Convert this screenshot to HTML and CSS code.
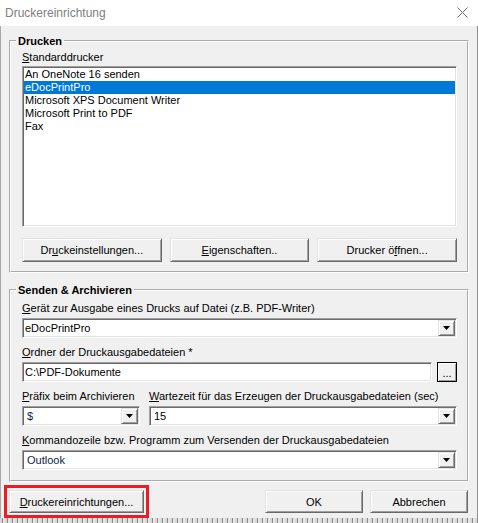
FILE: index.html
```html
<!DOCTYPE html>
<html>
<head>
  <meta charset="UTF-8">
  <title>Druckereinrichtung</title>
  <link rel="stylesheet" href="styles.css">
</head>
<body>
  <div class="window">
    <div class="titlebar">
      <span class="title">Druckereinrichtung</span>
      <svg class="close" width="11" height="11" viewBox="0 0 11 11">
        <path d="M0.5 0.5 L10.5 10.5 M10.5 0.5 L0.5 10.5" stroke="#6b6b6b" stroke-width="1" fill="none"/>
      </svg>
    </div>

    <div class="client">
      <fieldset class="group group-print">
        <legend>Drucken</legend>
        <div class="label"><u>S</u>tandarddrucker</div>
        <div class="listbox">
          <div class="item">An OneNote 16 senden</div>
          <div class="item selected">eDocPrintPro</div>
          <div class="item">Microsoft XPS Document Writer</div>
          <div class="item">Microsoft Print to PDF</div>
          <div class="item">Fax</div>
        </div>
        <div class="button-row">
          <button class="btn">Dr<u>u</u>ckeinstellungen...</button>
          <button class="btn"><u>E</u>igenschaften..</button>
          <button class="btn">Drucker ö<u>f</u>fnen...</button>
        </div>
      </fieldset>

      <fieldset class="group group-send">
        <legend>Senden &amp; Archivieren</legend>
        <div class="field">
          <div class="label"><u>G</u>erät zur Ausgabe eines Drucks auf Datei (z.B. PDF-Writer)</div>
          <div class="combo">
            <span class="value">eDocPrintPro</span>
            <span class="drop"><svg width="7" height="4"><polygon points="0,0 7,0 3.5,4" fill="#000"/></svg></span>
          </div>
        </div>
        <div class="field">
          <div class="label"><u>O</u>rdner der Druckausgabedateien *</div>
          <div class="input-row">
            <div class="textbox">C:\PDF-Dokumente</div>
            <button class="btn btn-browse">...</button>
          </div>
        </div>
        <div class="field-row">
          <div class="field">
            <div class="label"><u>P</u>räfix beim Archivieren</div>
            <div class="combo">
              <span class="value value-blue">$</span>
              <span class="drop"><svg width="7" height="4"><polygon points="0,0 7,0 3.5,4" fill="#000"/></svg></span>
            </div>
          </div>
          <div class="field">
            <div class="label"><u>W</u>artezeit für das Erzeugen der Druckausgabedateien (sec)</div>
            <div class="combo">
              <span class="value value-wide">15</span>
              <span class="drop"><svg width="7" height="4"><polygon points="0,0 7,0 3.5,4" fill="#000"/></svg></span>
            </div>
          </div>
        </div>
        <div class="field">
          <div class="label"><u>K</u>ommandozeile bzw. Programm zum Versenden der Druckausgabedateien</div>
          <div class="combo">
            <span class="value value-blue">Outlook</span>
            <span class="drop"><svg width="7" height="4"><polygon points="0,0 7,0 3.5,4" fill="#000"/></svg></span>
          </div>
        </div>
      </fieldset>

      <div class="footer">
        <button class="btn btn-setup"><u>D</u>ruckereinrichtungen...</button>
        <button class="btn btn-dialog">OK</button>
        <button class="btn btn-dialog">Abbrechen</button>
      </div>
    </div>
    <div class="desktop"></div>
  </div>
</body>
</html>
```

FILE: styles.css
```css
/* Dialog Druckereinrichtung */
body {
  margin: 0;
  padding: 0;
  font-family: "Liberation Sans", Arial, sans-serif;
  font-size: 11px;
  color: #000;
  background-color: #f0f0f0;
}

.window {
  width: 478px;
  height: 523px;
  display: flex;
  flex-direction: column;
  overflow: hidden;
}

.titlebar {
  height: 26px;
  background-color: #fff;
  display: flex;
  align-items: center;
  justify-content: space-between;
  padding: 0 10px 0 5px;
  flex-shrink: 0;
}

.title {
  font-size: 12px;
  color: #808080;
}

.close {
  margin-top: -1px;
}

.client {
  flex: 1;
  padding: 8px 8px 0 8px;
  border-left: 1px solid #a9a9a9;
  border-right: 1px solid #8c8c8c;
}

.group {
  margin: 0;
  padding: 3px 10px 9px 11px;
  border: 2px groove #fff;
  min-width: 0;
}

.group legend {
  padding: 0 2px;
  margin-left: -6px;
  font-weight: bold;
  line-height: 14px;
}

.group-send {
  margin-top: 10px;
  padding-top: 5px;
  padding-bottom: 10px;
}

.label {
  line-height: 13px;
  height: 13px;
  white-space: nowrap;
}

/* versenkte Felder */
.listbox,
.combo,
.textbox {
  box-sizing: border-box;
  background-color: #fff;
  border: 1px solid;
  border-color: #a0a0a0 #fff #fff #a0a0a0;
  box-shadow: inset 1px 1px 0 #696969, inset -1px -1px 0 #e3e3e3;
  padding: 1px;
}

.listbox {
  margin-top: 2px;
  height: 161px;
}

.item {
  line-height: 13px;
  padding-left: 1px;
}

.item.selected {
  background-color: #0078d7;
  color: #fff;
}

.button-row {
  display: grid;
  grid-template-columns: 1fr 1fr 1fr;
  gap: 8px;
  margin-top: 11px;
}

.btn {
  font-family: inherit;
  font-size: 11px;
  color: #000;
  background-color: #f0f0f0;
  border: 1px solid;
  border-color: #e3e3e3 #696969 #696969 #e3e3e3;
  box-shadow: inset 1px 1px 0 #fff, inset -1px -1px 0 #a0a0a0;
  height: 24px;
  padding: 0;
  margin: 0;
}

.field {
  display: flex;
  flex-direction: column;
  gap: 3px;
}

.field + .field,
.field + .field-row,
.field-row + .field {
  margin-top: 8px;
}

.field-row .field {
  margin-top: 0;
}

.combo {
  height: 20px;
  display: flex;
  align-items: center;
  justify-content: space-between;
}

.value {
  padding-left: 1px;
  line-height: 16px;
}

.value-blue {
  padding-left: 3px;
  color: #0c1e4a;
}

.value-wide {
  padding-left: 3px;
}

.drop {
  width: 17px;
  height: 16px;
  display: flex;
  align-items: center;
  justify-content: center;
  box-sizing: border-box;
  background-color: #f0f0f0;
  border: 1px solid;
  border-color: #e3e3e3 #696969 #696969 #e3e3e3;
  box-shadow: inset 1px 1px 0 #fff, inset -1px -1px 0 #a0a0a0;
}

.input-row {
  display: flex;
  gap: 5px;
}

.textbox {
  flex: 1;
  height: 20px;
  line-height: 16px;
  padding-left: 2px;
}

.btn-browse {
  width: 20px;
  height: 20px;
  border-color: #000;
  line-height: 14px;
  padding-top: 2px;
}

.field-row {
  display: grid;
  grid-template-columns: 118px 1fr;
  gap: 9px;
}

.footer {
  display: flex;
  gap: 7px;
  margin-top: 8px;
  padding-right: 1px;
}

.btn-setup {
  width: 135px;
  height: 23px;
  margin-right: auto;
  outline: 3px solid #e81d25;
  outline-offset: 2px;
}

.btn-dialog {
  width: 98px;
  height: 23px;
}

.desktop {
  height: 5px;
  flex-shrink: 0;
  background: repeating-linear-gradient(90deg, #d8d8d8 0 2px, #8a8a8a 2px 3px, #e6e6e6 3px 5px);
}
```
